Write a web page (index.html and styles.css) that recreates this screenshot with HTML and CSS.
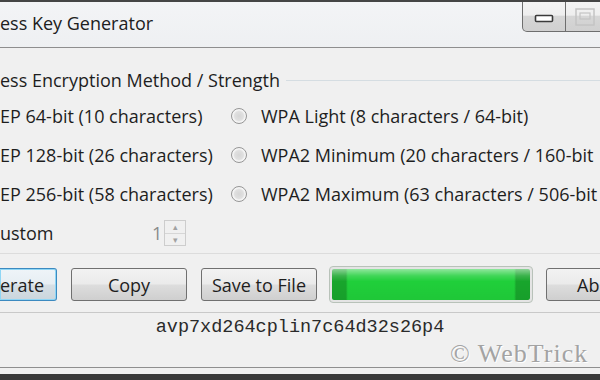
FILE: index.html
```html
<!DOCTYPE html>
<html lang="en">
<head>
  <meta charset="UTF-8">
  <title>Wireless Key Generator</title>
  <link rel="stylesheet" href="styles.css">
</head>
<body>
  <div class="window">
    <div class="titlebar">
      <span class="title">ess Key Generator</span>
      <div class="caption">
        <div class="cap cap-min">
          <svg width="20" height="10" viewBox="0 0 20 10"><rect x="1.5" y="1.5" width="17" height="6" rx="1" fill="#fff" stroke="#3a3a3a" stroke-width="1.6"/></svg>
        </div>
        <div class="cap cap-max">
          <svg width="20" height="18" viewBox="0 0 20 18"><rect x="1" y="1" width="18" height="16" fill="none" stroke="#c4c4c4" stroke-width="1.5"/><rect x="5" y="5" width="10" height="6" fill="none" stroke="#c4c4c4" stroke-width="1.2"/></svg>
        </div>
      </div>
    </div>

    <div class="group-head">
      <span class="group-label">ess Encryption Method / Strength</span>
      <span class="group-rule"></span>
    </div>

    <div class="options">
      <div class="opt-left">EP 64-bit (10 characters)</div>
      <label class="opt"><span class="radio"></span>WPA Light (8 characters / 64-bit)</label>

      <div class="opt-left">EP 128-bit (26 characters)</div>
      <label class="opt"><span class="radio"></span>WPA2 Minimum (20 characters / 160-bit</label>

      <div class="opt-left">EP 256-bit (58 characters)</div>
      <label class="opt"><span class="radio"></span>WPA2 Maximum (63 characters / 506-bit</label>

      <div class="opt-left custom">
        <span class="custom-label">ustom</span>
        <span class="spin-val">1</span>
        <span class="spin">
          <span class="spin-up">&#9652;</span>
          <span class="spin-down">&#9662;</span>
        </span>
      </div>
    </div>

    <div class="sep sep-light"></div>

    <div class="actions">
      <button class="btn btn-gen">erate</button>
      <button class="btn">Copy</button>
      <button class="btn">Save to File</button>
      <div class="progress"><div class="progress-fill"></div></div>
      <button class="btn btn-about">Ab</button>
    </div>

    <div class="sep"></div>

    <div class="key">avp7xd264cplin7c64d32s26p4</div>

    <div class="footer">
      <span class="watermark">&copy; WebTrick</span>
    </div>
    <div class="frame-bottom"></div>
  </div>
</body>
</html>
```

FILE: styles.css
```css
html, body {
  margin: 0;
}
body {
  width: 600px;
  height: 380px;
  overflow: hidden;
  background-color: #f0f0f0;
  font-family: "Open Sans", "Noto Sans", sans-serif;
  font-size: 18px;
  color: #1e1e1e;
}
.window {
  display: flex;
  flex-direction: column;
  width: 600px;
  height: 380px;
  overflow: hidden;
}

/* title bar */
.titlebar {
  display: flex;
  height: 45px;
  border-top: 2px solid #454545;
  border-bottom: 1px solid #8e8e8e;
  background: linear-gradient(#f3f4f6, #eef0f2);
  overflow: hidden;
}
.title {
  flex: 0 0 522px;
  font-size: 18px;
  line-height: 43px;
  color: #202020;
  white-space: nowrap;
}
.caption {
  display: flex;
  align-self: flex-start;
  flex-shrink: 0;
}
.cap {
  display: flex;
  align-items: center;
  justify-content: center;
  box-sizing: border-box;
  height: 30px;
  border: 1px solid #6e6e6e;
  border-top: none;
  background: linear-gradient(#f4f4f4 0, #eeeeee 45%, #d6d6d6 50%, #d0d0d0 100%);
}
.cap-min {
  width: 44px;
  border-radius: 0 0 0 5px;
  padding-top: 4px;
}
.cap-max {
  width: 44px;
  border-left: none;
  padding-right: 6px;
}

/* group box */
.group-head {
  display: flex;
  align-items: center;
  height: 24px;
  margin-top: 20px;
}
.group-label {
  white-space: nowrap;
  line-height: 24px;
}
.group-rule {
  flex: 1;
  height: 1px;
  margin-left: 6px;
  background-color: #d5dde2;
}
.options {
  display: grid;
  grid-template-columns: 231px auto;
  grid-auto-rows: 39px;
  margin-top: 4px;
  overflow: hidden;
}
.opt-left, .opt {
  display: flex;
  align-items: center;
  white-space: nowrap;
}
.opt .radio {
  margin-right: 14px;
  flex-shrink: 0;
}
.radio {
  width: 14px;
  height: 14px;
  border: 1px solid #969696;
  border-radius: 50%;
  background: radial-gradient(circle at 50% 50%, #d6d6d6 0, #e0e0e0 45%, #f6f6f6 62%, #e4e4e4 100%);
  box-shadow: inset 0 0 0 1px #f4f4f4;
}
.custom-label {
  width: 152px;
}
.spin-val {
  color: #8a8a8a;
  width: 12px;
}
.spin {
  display: flex;
  flex-direction: column;
  width: 20px;
  height: 24px;
  border: 1px solid #cdcdcd;
  margin-top: 1px;
}
.spin span {
  flex: 1;
  display: flex;
  align-items: center;
  justify-content: center;
  font-size: 9px;
  line-height: 1;
  color: #a2a2a2;
}
.spin-up {
  border-bottom: 1px solid #d6d6d6;
}

/* separators */
.sep {
  height: 1px;
  background-color: #c9c9c9;
  margin-top: 9px;
}
.sep-light {
  background-color: #dcdcdc;
  margin-top: 1px;
}

/* buttons */
.actions {
  display: flex;
  align-items: center;
  height: 37px;
  margin-top: 12px;
  overflow: hidden;
}
.btn {
  height: 33px;
  width: 116px;
  margin-right: 14px;
  padding: 0;
  border: 1px solid #707070;
  border-radius: 3px;
  background: linear-gradient(#f2f2f2 0, #ebebeb 48%, #dddddd 52%, #cfcfcf 100%);
  font-family: inherit;
  font-size: 18px;
  color: #1e1e1e;
  white-space: nowrap;
  flex-shrink: 0;
}
.btn-gen {
  width: 57px;
  text-align: left;
  padding-left: 0;
  border-color: #3c8ac0;
  border-radius: 0 3px 3px 0;
  border-left: none;
  box-shadow: inset 0 0 0 1px #8fd6f5;
  background: linear-gradient(#eef4f8 0, #e7eef3 48%, #d6dfe5 52%, #cbd6dd 100%);
}
.btn-about {
  text-align: left;
  padding-left: 30px;
}
.progress {
  width: 204px;
  height: 37px;
  box-sizing: border-box;
  margin-left: -2px;
  margin-right: 13px;
  border: 1px solid #b8c2b9;
  border-radius: 4px;
  padding: 2px;
  background-color: #e4e4e4;
  flex-shrink: 0;
}
.progress-fill {
  height: 100%;
  border-radius: 2px;
  background:
    linear-gradient(to bottom, rgba(255,255,255,0.5) 0, rgba(255,255,255,0.15) 22%, rgba(255,255,255,0) 40%, rgba(0,0,0,0.04) 100%),
    linear-gradient(to right, #18a52c 0, #18a52c 7%, #20cf3a 8%, #20cf3a 92%, #18a52c 93%, #18a52c 100%);
}

/* key output */
.key {
  font-family: "Liberation Mono", monospace;
  font-size: 18.5px;
  line-height: 26px;
  padding-top: 2px;
  text-align: center;
  color: #2a2a2a;
}
.footer {
  display: flex;
  align-items: flex-end;
  height: 26px;
  border-bottom: 1px solid #8f8f8f;
}
.watermark {
  margin-left: 450px;
  font-family: "Liberation Serif", serif;
  font-size: 26px;
  line-height: 26px;
  letter-spacing: 1px;
  color: #a3a3a3;
  text-shadow: 1px 1px 0 #ffffff;
  white-space: nowrap;
}
.frame-bottom {
  height: 6px;
  border-bottom: 6px solid #3a3a3a;
}
```
